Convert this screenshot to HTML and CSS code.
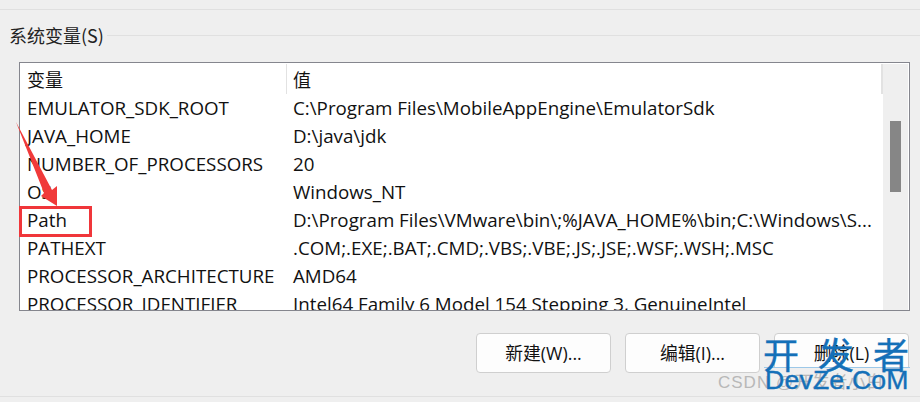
FILE: index.html
```html
<!DOCTYPE html>
<html lang="zh">
<head>
<meta charset="utf-8">
<title>系统变量</title>
<link rel="stylesheet" href="styles.css">
</head>
<body>
<div class="page">
  <div class="rule-top"></div>
  <div class="group-title"><span class="group-label">系统变量(S)</span><span class="group-line"></span></div>
  <div class="listbox">
    <div class="list-main">
      <div class="row head"><div class="c1">变量</div><div class="c2">值</div></div>
      <div class="row"><div class="c1">EMULATOR_SDK_ROOT</div><div class="c2">C:\Program Files\MobileAppEngine\EmulatorSdk</div></div>
      <div class="row"><div class="c1">JAVA_HOME</div><div class="c2">D:\java\jdk</div></div>
      <div class="row"><div class="c1">NUMBER_OF_PROCESSORS</div><div class="c2">20</div></div>
      <div class="row"><div class="c1">OS</div><div class="c2">Windows_NT</div></div>
      <div class="row"><div class="c1">Path</div><div class="c2">D:\Program Files\VMware\bin\;%JAVA_HOME%\bin;C:\Windows\S...</div></div>
      <div class="row"><div class="c1">PATHEXT</div><div class="c2">.COM;.EXE;.BAT;.CMD;.VBS;.VBE;.JS;.JSE;.WSF;.WSH;.MSC</div></div>
      <div class="row"><div class="c1">PROCESSOR_ARCHITECTURE</div><div class="c2">AMD64</div></div>
      <div class="row"><div class="c1">PROCESSOR_IDENTIFIER</div><div class="c2">Intel64 Family 6 Model 154 Stepping 3, GenuineIntel</div></div>
    </div>
    <div class="scrollbar"><div class="thumb"></div></div>
  </div>
  <div class="buttons">
    <button class="btn">新建(W)...</button>
    <button class="btn">编辑(I)...</button>
    <button class="btn">删除(L)</button>
  </div>
  <div class="rule-bottom"></div>
</div>
<div class="red-box"></div>
<svg class="arrow" width="50" height="100" viewBox="0 0 50 100"><path d="M0 3 L36 71 L41 67 L41 87 L25 77 L28 74 Z" fill="#f03a3a"/></svg>
<div class="mark-strip"></div>
<div class="csdn">CSDN @开发者小白</div>
<div class="mark-cn"><span>开</span><span>发</span><span>者</span></div>
<div class="mark-en">DevZe.CoM</div>
</body>
</html>
```

FILE: styles.css
```css
html, body { margin: 0; padding: 0; }
body {
  width: 920px;
  height: 402px;
  overflow: hidden;
  position: relative;
  background: #efefef;
  font-family: "Open Sans", "Noto Sans CJK SC", sans-serif;
  color: #111;
}
.page { padding-top: 9px; display: flex; flex-direction: column; }
.rule-top { height: 1px; background: #e0e0e0; flex: none; }
.group-title {
  display: flex;
  align-items: center;
  height: 30px;
  margin-top: 10px;
  margin-bottom: 12px;
  padding-left: 9px;
  flex: none;
}
.group-label { font-family: "Noto Sans CJK SC", sans-serif; font-size: 18px; line-height: 30px; padding-right: 3px; color: #222; }
.group-line { flex: 1; height: 1px; background: #e0e0e0; }
.listbox {
  width: 889px;
  height: 247px;
  margin-left: 19px;
  border: 1px solid #85868e;
  background: #fff;
  display: flex;
  flex: none;
}
.list-main { width: 863px; height: 247px; overflow: hidden; flex: none; }
.row { display: flex; height: 28px; font-size: 18.76px; line-height: 28px; white-space: nowrap; }
.row.head { height: 30px; margin-top: 1px; line-height: 30px; font-family: "Noto Sans CJK SC", sans-serif; font-size: 18px; }
.c1 { width: 259px; padding-left: 7px; flex: none; }
.c2 { flex: 1; padding-left: 7px; }
.head .c2 { border-left: 1px solid #e2e2e2; padding-left: 6px; border-right: 2px solid #e2e2e2; }
.scrollbar {
  flex: none;
  width: 25px;
  height: 246px;
  margin-top: 1px;
  padding-top: 57px;
  box-sizing: border-box;
  background: #efefef;
  display: flex;
  justify-content: center;
}
.thumb { width: 11px; height: 71px; background: #868686; }
.buttons { display: flex; gap: 14px; margin-top: 22px; margin-left: 476px; flex: none; }
.btn {
  width: 135px;
  height: 40px;
  padding: 0 0 2px;
  border: 1px solid #cfcfcf;
  border-radius: 4px;
  background: #fdfdfd;
  font-family: "Open Sans", "Noto Sans CJK SC", sans-serif;
  font-size: 17.8px;
  color: #111;
}
.rule-bottom { height: 1px; background: #e0e0e0; margin-top: 23px; flex: none; }
.red-box { position: absolute; left: 19px; top: 206px; width: 67px; height: 25px; border: 3px solid #f0363a; }
.arrow { position: absolute; left: 16px; top: 119px; }
.mark-strip { position: absolute; left: 764px; top: 367px; width: 146px; height: 7px; background: #efefef; border-top: 1px solid #9cc8e8; box-sizing: border-box; }
.csdn { position: absolute; left: 718px; top: 373px; font-family: "Liberation Sans", "Noto Sans CJK SC", sans-serif; font-size: 17px; line-height: 20px; letter-spacing: 1px; color: #b8b8b8; white-space: nowrap; }
.mark-cn { position: absolute; left: 763px; top: 328px; width: 146px; display: flex; justify-content: space-between; font-family: "Noto Sans CJK SC", sans-serif; font-size: 36px; line-height: 50px; color: #1470b8; -webkit-text-stroke: 0.4px #1470b8; }
.mark-en { position: absolute; left: 765px; top: 360px; font-family: "Liberation Sans", sans-serif; font-size: 26.6px; line-height: 40px; letter-spacing: 0.2px; color: #1470b8; -webkit-text-stroke: 0.4px #1470b8; white-space: nowrap; }
```
